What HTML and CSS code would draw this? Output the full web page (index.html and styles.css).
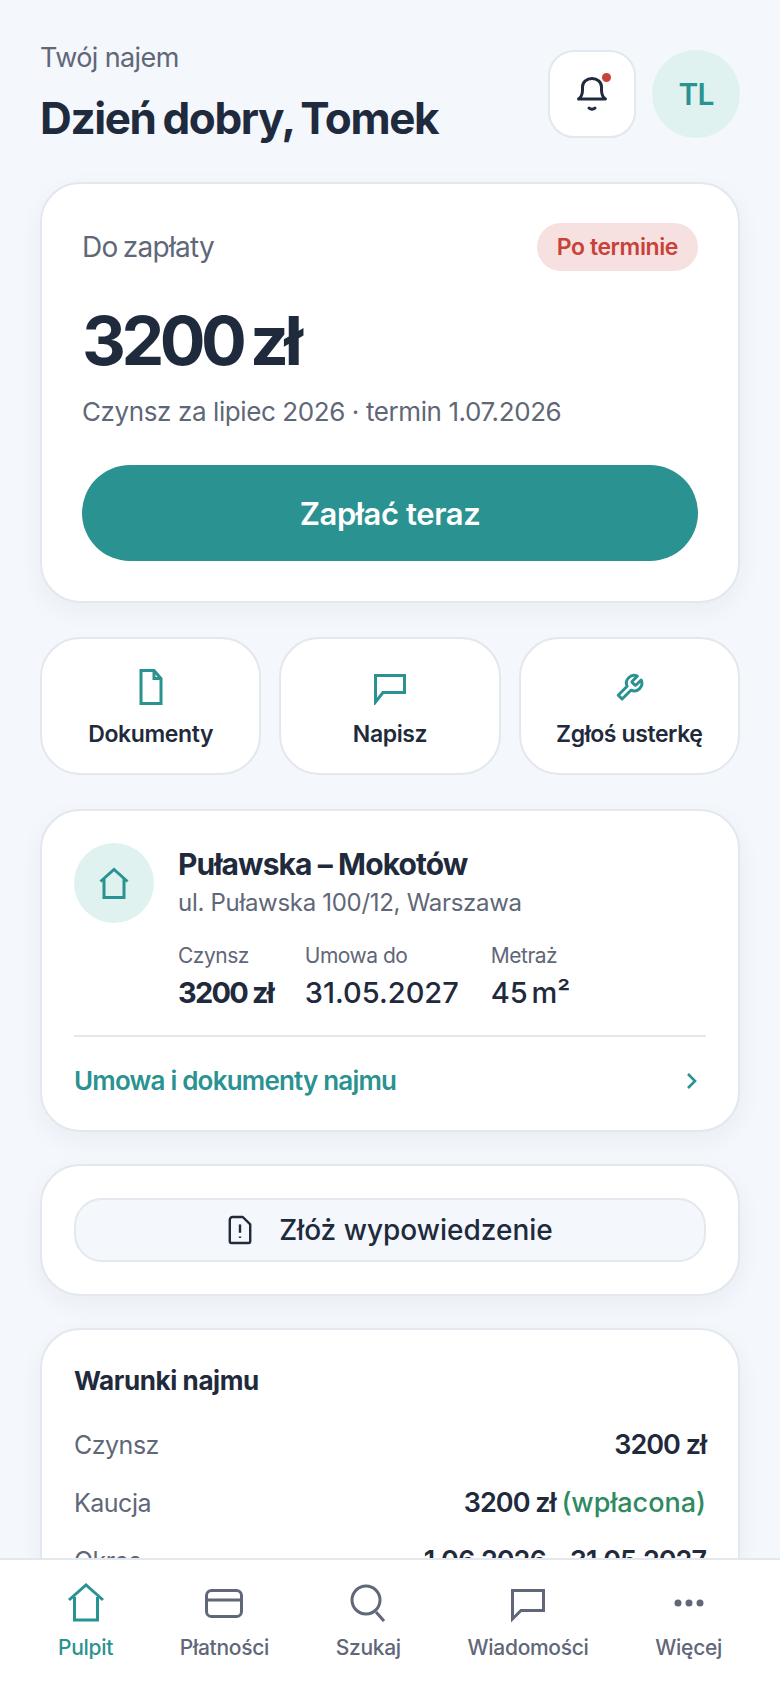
FILE: index.html
```html
<!DOCTYPE html>
<html lang="pl">
<head>
  <meta charset="UTF-8" />
  <meta name="viewport" content="width=device-width, initial-scale=1.0"/>
  <title>Twój najem</title>
  <link rel="stylesheet" href="styles.css">
</head>
<body>
  <main class="screen">
    <header class="top">
      <div class="top-text">
        <div class="eyebrow">Twój najem</div>
        <h1 class="hello">Dzień dobry, Tomek</h1>
      </div>
      <div class="bell">
        <svg class="bell-icon" viewBox="0 0 32 36"><path d="M2.500 23c3-2 4-5 4-9v-3a9.500 8.500 0 0 1 19 0v3c0 4 1 7 4 9z"/><path d="M13 32c1.500 1.500 4.500 1.500 6 0"/></svg>
        <span class="bell-dot"></span>
      </div>
      <div class="avatar">TL</div>
    </header>

    <section class="card pay">
      <div class="pay-head">
        <span class="pay-label">Do zapłaty</span>
        <span class="badge">Po terminie</span>
      </div>
      <div class="amount">3200 zł</div>
      <div class="pay-sub">Czynsz za lipiec 2026 · termin 1.07.2026</div>
      <div class="pay-btn">Zapłać teraz</div>
    </section>

    <section class="actions">
      <div class="action">
        <svg class="icon-md" viewBox="0 0 36 36"><path d="M8 1.500h13l7 8v25H8z"/><path d="M21 1.500v8h7"/></svg>
        <span>Dokumenty</span>
      </div>
      <div class="action">
        <svg class="icon-md" viewBox="0 0 36 36"><path d="M3.500 6.500h29v17H11l-7.500 9.500z"/></svg>
        <span>Napisz</span>
      </div>
      <div class="action">
        <svg class="icon-md icon-wrench" viewBox="-2 -3 28 28"><path d="M14.700 6.300a1 1 0 0 0 0 1.400l1.600 1.600a1 1 0 0 0 1.400 0l3.770-3.770a6 6 0 0 1-7.940 7.940l-6.910 6.910-3-3 6.910-6.910a6 6 0 0 1 7.940-7.940l-3.760 3.760z"/></svg>
        <span>Zgłoś usterkę</span>
      </div>
    </section>

    <section class="card place">
      <div class="place-main">
        <div class="place-icon">
          <svg viewBox="0 0 32 32"><path d="M2.500 14.500 16 2.500l13.500 12"/><path d="M6 12v18.500h20V12"/></svg>
        </div>
        <div class="place-body">
          <div class="place-name">Puławska – Mokotów</div>
          <div class="place-addr">ul. Puławska 100/12, Warszawa</div>
          <div class="facts">
            <div class="fact"><span>Czynsz</span><b class="strong">3200 zł</b></div>
            <div class="fact"><span>Umowa do</span><b>31.05.2027</b></div>
            <div class="fact"><span>Metraż</span><b>45 m²</b></div>
          </div>
        </div>
      </div>
      <div class="place-link">
        <span>Umowa i dokumenty najmu</span>
        <svg viewBox="0 0 20 20"><path d="M6 3l7 7-7 7"/></svg>
      </div>
    </section>

    <section class="card notice">
      <div class="notice-btn">
        <svg viewBox="0 0 28 32"><path d="M6 2h11l8 8v18a2 2 0 0 1-2 2H5a2 2 0 0 1-2-2V5a3 3 0 0 1 3-3z"/><path d="M14 10v9"/><path d="M14 23v1.500"/></svg>
        <span>Złóż wypowiedzenie</span>
      </div>
    </section>

    <section class="card terms">
      <h2 class="terms-title">Warunki najmu</h2>
      <div class="term"><span>Czynsz</span><b>3200 zł</b></div>
      <div class="term"><span>Kaucja</span><b>3200 zł <em>(wpłacona)</em></b></div>
      <div class="term"><span>Okres</span><b>1.06.2026 – 31.05.2027</b></div>
    </section>
  </main>

  <nav class="tabbar">
    <div class="tab tab-on">
      <svg viewBox="0 0 40 40"><path d="M3 17 20 2l17 15"/><path d="M8.500 14v23h23V14"/></svg>
      <span>Pulpit</span>
    </div>
    <div class="tab">
      <svg viewBox="0 0 40 40"><rect x="2.500" y="7.500" width="35" height="26" rx="5"/><path d="M2.500 17h35"/></svg>
      <span>Płatności</span>
    </div>
    <div class="tab">
      <svg viewBox="0 0 40 40"><circle cx="18" cy="17" r="14"/><path d="m28 29 8 9"/></svg>
      <span>Szukaj</span>
    </div>
    <div class="tab">
      <svg viewBox="0 0 40 40"><path d="M4.500 7.500h31v20H13l-8.500 8.500z"/></svg>
      <span>Wiadomości</span>
    </div>
    <div class="tab">
      <svg class="dots" viewBox="0 0 40 40"><circle cx="9" cy="20" r="3.500"/><circle cx="20" cy="20" r="3.500"/><circle cx="31" cy="20" r="3.500"/></svg>
      <span>Więcej</span>
    </div>
  </nav>
</body>
</html>
```

FILE: styles.css
```css
* { margin: 0; padding: 0; box-sizing: border-box; }
html, body { height: 100%; overflow: hidden; }
body {
  display: flex; flex-direction: column;
  background: #f4f7fc; color: #1f2a3c;
  font-family: Inter, "Noto Sans", sans-serif;
}
svg { fill: none; }

.screen { flex: 1; min-height: 0; overflow: hidden; padding: 43px 40px 0; }

.top { display: flex; align-items: center; gap: 16px; }
.top-text { flex: 1; }
.eyebrow { font-size: 27px; letter-spacing: -0.6px; color: #5f6778; line-height: 30px; }
.hello { font-size: 44px; font-weight: 700; letter-spacing: -1.4px; word-spacing: -2px; line-height: 54px; margin-top: 18px; }
.bell {
  position: relative; width: 88px; height: 88px; border-radius: 26px;
  background: #fff; border: 2px solid #e3e7ee;
  display: flex; align-items: center; justify-content: center;
}
.bell-icon { width: 32px; height: 36px; stroke: #1f2a3c; stroke-width: 3; stroke-linejoin: round; stroke-linecap: round; }
.bell-dot {
  position: absolute; top: 21px; right: 23px;
  width: 9px; height: 9px; border-radius: 50%; background: #c9423a;
}
.avatar {
  width: 88px; height: 88px; border-radius: 50%;
  background: #dff2f0; color: #2a9290;
  display: flex; align-items: center; justify-content: center;
  font-size: 30px; font-weight: 600; letter-spacing: -1px;
}

.card {
  background: #fff; border: 2px solid #e3e7ee; border-radius: 40px;
  box-shadow: 0 8px 24px rgba(31,42,60,0.05);
}

.pay { margin-top: 37px; padding: 39px 40px 40px; }
.pay-head { display: flex; align-items: center; justify-content: space-between; }
.pay-label { font-size: 28px; color: #5f6778; letter-spacing: -0.7px; word-spacing: -2px; }
.badge {
  background: #f6e1e0; color: #c9423a;
  font-size: 23px; font-weight: 600; letter-spacing: -0.4px;
  padding: 0 20px; height: 48px; line-height: 48px; border-radius: 24px;
}
.amount { font-size: 68px; font-weight: 700; letter-spacing: -4.5px; word-spacing: -4px; line-height: 88px; margin-top: 25px; }
.pay-sub { font-size: 26px; color: #5f6778; letter-spacing: -0.4px; margin-top: 11px; line-height: 34px; }
.pay-btn {
  margin-top: 36px; height: 96px; border-radius: 48px;
  background: #2a9290; color: #fff;
  display: flex; align-items: center; justify-content: center;
  font-size: 31px; font-weight: 600; letter-spacing: -0.4px;
}

.actions { display: flex; gap: 18px; margin-top: 34px; }
.action {
  flex: 1; height: 138px; background: #fff; padding-top: 30px;
  border: 2px solid #e3e7ee; border-radius: 40px;
  display: flex; flex-direction: column; align-items: center; gap: 14px;
  font-size: 23px; font-weight: 600; letter-spacing: -0.4px; line-height: 30px;
}
.icon-md { width: 36px; height: 36px; stroke: #2a9290; stroke-width: 3; }
.icon-wrench { stroke-width: 2.300; stroke-linejoin: round; }

.place { margin-top: 34px; padding: 32px 32px 33px; }
.place-main { display: flex; gap: 24px; }
.place-icon {
  flex: none; width: 80px; height: 80px; border-radius: 50%;
  background: #dff2f0; display: flex; align-items: center; justify-content: center;
}
.place-icon svg { width: 32px; height: 32px; stroke: #2a9290; stroke-width: 3; }
.place-body { flex: 1; padding-top: 2px; }
.place-name { font-size: 30px; font-weight: 700; letter-spacing: -0.9px; line-height: 38px; }
.place-addr { font-size: 24px; color: #5f6778; letter-spacing: -0.3px; line-height: 32px; margin-top: 4px; }
.facts { display: flex; gap: 32px; margin-top: 24px; }
.fact { display: flex; flex-direction: column; gap: 6px; font-size: 21px; letter-spacing: -0.5px; line-height: 26px; color: #5f6778; }
.fact b { font-size: 29px; font-weight: 500; letter-spacing: 0; word-spacing: -4px; color: #1f2a3c; line-height: 36px; }
.fact b.strong { font-weight: 700; letter-spacing: -1.8px; word-spacing: 0; }
.place-link {
  margin-top: 24px; padding-top: 28px; border-top: 2px solid #e3e7ee;
  display: flex; align-items: center; justify-content: space-between;
  color: #2a9290; font-size: 26px; font-weight: 600; letter-spacing: -0.8px; line-height: 32px;
}
.place-link svg { width: 20px; height: 20px; stroke: #2a9290; stroke-width: 2.600; margin-right: 4px; }

.notice { margin-top: 32px; padding: 32px; }
.notice-btn {
  height: 64px; border-radius: 28px; background: #f4f7fc;
  border: 2px solid #e3e7ee;
  display: flex; align-items: center; justify-content: center; gap: 26px;
  font-size: 28px; font-weight: 500;
}
.notice-btn svg { width: 26px; height: 30px; stroke: #1f2a3c; stroke-width: 2.600; stroke-linejoin: round; }

.terms { margin-top: 32px; padding: 34px 32px 32px; }
.terms-title { font-size: 26px; font-weight: 700; letter-spacing: -0.4px; line-height: 34px; margin-bottom: 30px; }
.term {
  display: flex; justify-content: space-between; align-items: center;
  margin-top: 24px; line-height: 34px; font-size: 25px; letter-spacing: -0.5px; color: #5f6778;
}
.terms-title + .term { margin-top: 0; }
.term b { font-size: 27px; font-weight: 600; color: #1f2a3c; letter-spacing: -1px; }
.term em { font-style: normal; font-weight: 500; color: #2f8a5f; letter-spacing: 0; }

.tabbar {
  flex: none; height: 130px; background: #fff; border-top: 2px solid #e3e7ee;
  display: flex; justify-content: space-between; padding: 23px 58px 0;
}
.tab {
  display: flex; flex-direction: column; align-items: center; gap: 12px;
  font-size: 21px; font-weight: 500; letter-spacing: -0.3px; color: #5f6778;
}
.tab svg { width: 40px; height: 40px; stroke: #5f6778; stroke-width: 3; }
.tab .dots { fill: #5f6778; stroke: none; }
.tab-on { color: #2a9290; }
.tab-on svg { stroke: #2a9290; }
```
